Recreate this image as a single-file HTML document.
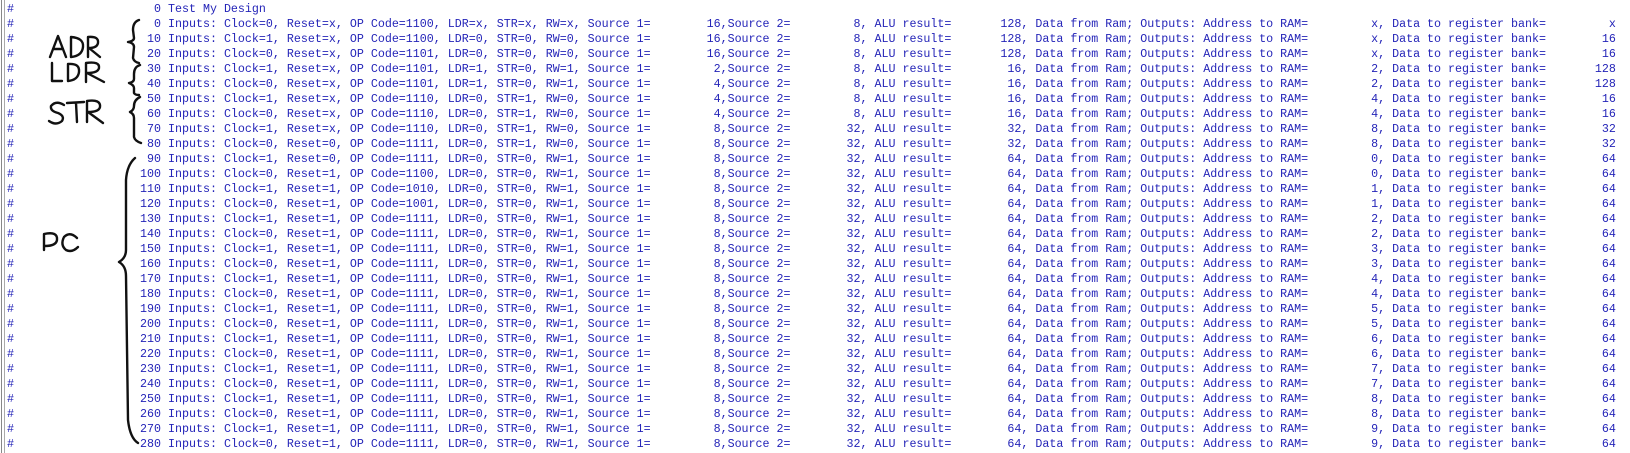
<!DOCTYPE html>
<html><head><meta charset="utf-8"><style>
html,body{margin:0;padding:0;background:#fff;width:1630px;height:453px;overflow:hidden;position:relative}
.b1{position:absolute;left:1px;top:0;width:1px;height:453px;background:#888}
.b2{position:absolute;left:4px;top:0;width:1px;height:453px;background:#aaa}
pre{position:absolute;margin:0;font-family:"Liberation Mono",monospace;font-size:11.67px;line-height:15px;color:#2424b8;white-space:pre}
#h{left:7px;top:1.5px}
#t{left:140px;top:1.5px}
svg{position:absolute;left:0;top:0}
</style></head><body>
<div class="b1"></div><div class="b2"></div>
<pre id="h">#
#
#
#
#
#
#
#
#
#
#
#
#
#
#
#
#
#
#
#
#
#
#
#
#
#
#
#
#
#</pre>
<pre id="t">  0 Test My Design
  0 Inputs: Clock=0, Reset=x, OP Code=1100, LDR=x, STR=x, RW=x, Source 1=        16,Source 2=         8, ALU result=       128, Data from Ram; Outputs: Address to RAM=         x, Data to register bank=         x
 10 Inputs: Clock=1, Reset=x, OP Code=1100, LDR=0, STR=0, RW=0, Source 1=        16,Source 2=         8, ALU result=       128, Data from Ram; Outputs: Address to RAM=         x, Data to register bank=        16
 20 Inputs: Clock=0, Reset=x, OP Code=1101, LDR=0, STR=0, RW=0, Source 1=        16,Source 2=         8, ALU result=       128, Data from Ram; Outputs: Address to RAM=         x, Data to register bank=        16
 30 Inputs: Clock=1, Reset=x, OP Code=1101, LDR=1, STR=0, RW=1, Source 1=         2,Source 2=         8, ALU result=        16, Data from Ram; Outputs: Address to RAM=         2, Data to register bank=       128
 40 Inputs: Clock=0, Reset=x, OP Code=1101, LDR=1, STR=0, RW=1, Source 1=         4,Source 2=         8, ALU result=        16, Data from Ram; Outputs: Address to RAM=         2, Data to register bank=       128
 50 Inputs: Clock=1, Reset=x, OP Code=1110, LDR=0, STR=1, RW=0, Source 1=         4,Source 2=         8, ALU result=        16, Data from Ram; Outputs: Address to RAM=         4, Data to register bank=        16
 60 Inputs: Clock=0, Reset=x, OP Code=1110, LDR=0, STR=1, RW=0, Source 1=         4,Source 2=         8, ALU result=        16, Data from Ram; Outputs: Address to RAM=         4, Data to register bank=        16
 70 Inputs: Clock=1, Reset=x, OP Code=1110, LDR=0, STR=1, RW=0, Source 1=         8,Source 2=        32, ALU result=        32, Data from Ram; Outputs: Address to RAM=         8, Data to register bank=        32
 80 Inputs: Clock=0, Reset=0, OP Code=1111, LDR=0, STR=1, RW=0, Source 1=         8,Source 2=        32, ALU result=        32, Data from Ram; Outputs: Address to RAM=         8, Data to register bank=        32
 90 Inputs: Clock=1, Reset=0, OP Code=1111, LDR=0, STR=0, RW=1, Source 1=         8,Source 2=        32, ALU result=        64, Data from Ram; Outputs: Address to RAM=         0, Data to register bank=        64
100 Inputs: Clock=0, Reset=1, OP Code=1100, LDR=0, STR=0, RW=1, Source 1=         8,Source 2=        32, ALU result=        64, Data from Ram; Outputs: Address to RAM=         0, Data to register bank=        64
110 Inputs: Clock=1, Reset=1, OP Code=1010, LDR=0, STR=0, RW=1, Source 1=         8,Source 2=        32, ALU result=        64, Data from Ram; Outputs: Address to RAM=         1, Data to register bank=        64
120 Inputs: Clock=0, Reset=1, OP Code=1001, LDR=0, STR=0, RW=1, Source 1=         8,Source 2=        32, ALU result=        64, Data from Ram; Outputs: Address to RAM=         1, Data to register bank=        64
130 Inputs: Clock=1, Reset=1, OP Code=1111, LDR=0, STR=0, RW=1, Source 1=         8,Source 2=        32, ALU result=        64, Data from Ram; Outputs: Address to RAM=         2, Data to register bank=        64
140 Inputs: Clock=0, Reset=1, OP Code=1111, LDR=0, STR=0, RW=1, Source 1=         8,Source 2=        32, ALU result=        64, Data from Ram; Outputs: Address to RAM=         2, Data to register bank=        64
150 Inputs: Clock=1, Reset=1, OP Code=1111, LDR=0, STR=0, RW=1, Source 1=         8,Source 2=        32, ALU result=        64, Data from Ram; Outputs: Address to RAM=         3, Data to register bank=        64
160 Inputs: Clock=0, Reset=1, OP Code=1111, LDR=0, STR=0, RW=1, Source 1=         8,Source 2=        32, ALU result=        64, Data from Ram; Outputs: Address to RAM=         3, Data to register bank=        64
170 Inputs: Clock=1, Reset=1, OP Code=1111, LDR=0, STR=0, RW=1, Source 1=         8,Source 2=        32, ALU result=        64, Data from Ram; Outputs: Address to RAM=         4, Data to register bank=        64
180 Inputs: Clock=0, Reset=1, OP Code=1111, LDR=0, STR=0, RW=1, Source 1=         8,Source 2=        32, ALU result=        64, Data from Ram; Outputs: Address to RAM=         4, Data to register bank=        64
190 Inputs: Clock=1, Reset=1, OP Code=1111, LDR=0, STR=0, RW=1, Source 1=         8,Source 2=        32, ALU result=        64, Data from Ram; Outputs: Address to RAM=         5, Data to register bank=        64
200 Inputs: Clock=0, Reset=1, OP Code=1111, LDR=0, STR=0, RW=1, Source 1=         8,Source 2=        32, ALU result=        64, Data from Ram; Outputs: Address to RAM=         5, Data to register bank=        64
210 Inputs: Clock=1, Reset=1, OP Code=1111, LDR=0, STR=0, RW=1, Source 1=         8,Source 2=        32, ALU result=        64, Data from Ram; Outputs: Address to RAM=         6, Data to register bank=        64
220 Inputs: Clock=0, Reset=1, OP Code=1111, LDR=0, STR=0, RW=1, Source 1=         8,Source 2=        32, ALU result=        64, Data from Ram; Outputs: Address to RAM=         6, Data to register bank=        64
230 Inputs: Clock=1, Reset=1, OP Code=1111, LDR=0, STR=0, RW=1, Source 1=         8,Source 2=        32, ALU result=        64, Data from Ram; Outputs: Address to RAM=         7, Data to register bank=        64
240 Inputs: Clock=0, Reset=1, OP Code=1111, LDR=0, STR=0, RW=1, Source 1=         8,Source 2=        32, ALU result=        64, Data from Ram; Outputs: Address to RAM=         7, Data to register bank=        64
250 Inputs: Clock=1, Reset=1, OP Code=1111, LDR=0, STR=0, RW=1, Source 1=         8,Source 2=        32, ALU result=        64, Data from Ram; Outputs: Address to RAM=         8, Data to register bank=        64
260 Inputs: Clock=0, Reset=1, OP Code=1111, LDR=0, STR=0, RW=1, Source 1=         8,Source 2=        32, ALU result=        64, Data from Ram; Outputs: Address to RAM=         8, Data to register bank=        64
270 Inputs: Clock=1, Reset=1, OP Code=1111, LDR=0, STR=0, RW=1, Source 1=         8,Source 2=        32, ALU result=        64, Data from Ram; Outputs: Address to RAM=         9, Data to register bank=        64
280 Inputs: Clock=0, Reset=1, OP Code=1111, LDR=0, STR=0, RW=1, Source 1=         8,Source 2=        32, ALU result=        64, Data from Ram; Outputs: Address to RAM=         9, Data to register bank=        64</pre>
<svg width="200" height="453" viewBox="0 0 200 453" fill="none" stroke="#111" stroke-width="2.4" stroke-linecap="round" stroke-linejoin="round">
<!-- ADR -->
<path d="M50 57 L58 36 L66 57 M53 49 L63 49"/>
<path d="M71 37 L71 57 M71 37 Q84 38 83 47 Q82 56 71 57"/>
<path d="M88 57 L88 37 Q99 36 98 43 Q97 48 89 48 L100 57"/>
<!-- LDR -->
<path d="M52 63 L52 81 L62 81"/>
<path d="M68 64 L68 81 M68 64 Q80 63 79 72 Q78 80 68 81"/>
<path d="M86 82 L86 63 Q100 61 99 68 Q98 73 87 73 L104 82"/>
<!-- STR -->
<path d="M64 105 Q56 100 51 106 Q50 111 58 113 Q65 116 62 121 Q56 126 49 121"/>
<path d="M67 103 L84 102 M76 103 L77 122"/>
<path d="M87 122 L87 101 Q101 99 100 107 Q99 112 88 112 L103 123"/>
<!-- PC -->
<path d="M44 250 L44 234 Q58 231 57 240 Q56 246 45 246"/>
<path d="M77 238 Q70 231 64 237 Q60 245 66 250 Q72 253 78 247"/>
<!-- braces -->
<path d="M139 20 Q133 22 133 30 L134 38 Q134 41 128 42 Q134 43 134 47 L133 58 Q134 62 139 63"/>
<path d="M140 65 Q134 67 134 74 L134 79 Q134 82 129 83 Q134 85 134 88 L134 93 Q135 95 139 95"/>
<path d="M140 97 Q134 100 134 106 Q134 110 130 112 Q134 114 134 118 L134 137 Q135 141 141 143"/>
<path d="M135 158 Q127 165 126 180 L126 250 Q126 258 119 262 Q126 266 126 276 L128 420 Q130 438 138 443"/>
</svg>
</body></html>
